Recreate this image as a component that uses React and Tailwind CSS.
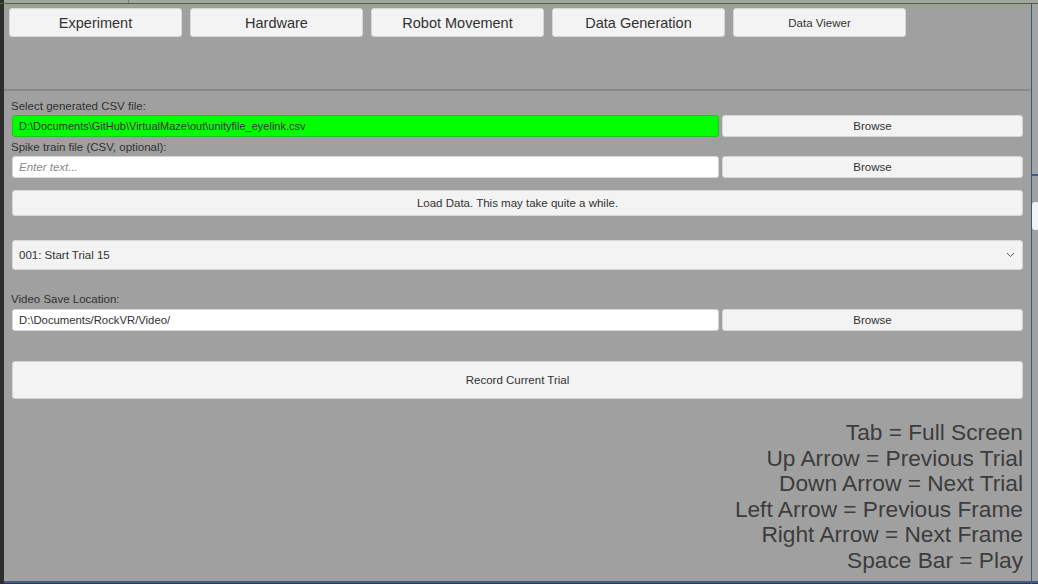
import React from "react";

const font = { fontFamily: '"Liberation Sans", Arial, sans-serif' };

function Tab({ children, small }) {
  return (
    <div
      className={`w-[173px] h-[29px] pt-[2px] rounded-[3px] bg-[#f3f3f3] border border-[#d8d8d8] flex items-center justify-center text-[#323232] ${small ? "text-[11.5px]" : "text-[14.5px]"}`}
    >
      {children}
    </div>
  );
}

function Btn({ children, className = "" }) {
  return (
    <div
      className={`rounded-[3px] bg-[#f3f3f3] border border-[#d6d6d6] flex items-center justify-center pt-[2px] text-[11.5px] text-[#323232] ${className}`}
    >
      {children}
    </div>
  );
}

export default function App() {
  return (
    <div
      className="w-[1038px] h-[584px] overflow-hidden flex flex-col bg-[#3a3a3a]"
      style={font}
    >
      {/* top strip */}
      <div className="h-[3px] flex bg-[#a5a5a5]">
        <div className="w-[4px] bg-[#2e2e2e]" />
        <div className="w-[124px]" />
        <div className="w-[1px] bg-[#7a7a7a]" />
        <div className="flex-1" />
      </div>
      <div className="h-[1px] bg-[#3d5a8a]" />
      <div className="flex flex-1 min-h-0">
        <div className="w-[4px] bg-[#2e2e2e]" />
        {/* main */}
        <div className="w-[1027px] flex flex-col bg-[#a0a0a0]">
          <div className="h-[85px] pt-[4px] pl-[5px] flex gap-[8px] items-start">
            <Tab>Experiment</Tab>
            <Tab>Hardware</Tab>
            <Tab>Robot Movement</Tab>
            <Tab>Data Generation</Tab>
            <Tab small>Data Viewer</Tab>
          </div>
          <div className="h-[2px] bg-[#898989]" />
          <div className="flex-1 flex flex-col px-[8px] pt-[7px]">
            <div className="h-[16px] pt-[1px] flex items-center text-[11.5px] text-[#323232] -ml-[1px]">
              Select generated CSV file:
            </div>
            <div className="mt-[1px] flex gap-[3px] h-[22px]">
              <div className="w-[707px] rounded-[3px] bg-[#00ff00] border border-[#22c022] flex items-center pl-[6px] pt-[1px] text-[11px] text-[#323232]">
                D:\Documents\GitHub\VirtualMaze\out\unityfile_eyelink.csv
              </div>
              <Btn className="flex-1">Browse</Btn>
            </div>
            <div className="mt-[2px] h-[16px] pt-[1px] flex items-center text-[11.5px] text-[#323232] -ml-[1px]">
              Spike train file (CSV, optional):
            </div>
            <div className="mt-[1px] flex gap-[3px] h-[22px]">
              <div className="w-[707px] rounded-[3px] bg-white border border-[#d6d6d6] flex items-center pl-[6px] pt-[1px] text-[11.5px] italic text-[#8a8a8a]">
                Enter text...
              </div>
              <Btn className="flex-1">Browse</Btn>
            </div>
            <Btn className="mt-[12px] h-[26px]">Load Data. This may take quite a while.</Btn>
            <div className="mt-[24px] h-[30px] rounded-[3px] bg-[#f3f3f3] border border-[#d6d6d6] flex items-center justify-between pl-[6px] pr-[7px] text-[11.5px] text-[#323232]">
              <span className="pt-[2px]">001: Start Trial 15</span>
              <svg width="9" height="6" viewBox="0 0 9 6" fill="none">
                <path d="M1 1l3.5 3.5L8 1" stroke="#555" strokeWidth="1" />
              </svg>
            </div>
            <div className="mt-[21px] h-[16px] pt-[1px] flex items-center text-[11.5px] text-[#323232] -ml-[1px]">
              Video Save Location:
            </div>
            <div className="mt-[2px] flex gap-[3px] h-[22px]">
              <div className="w-[707px] rounded-[3px] bg-white border border-[#d6d6d6] flex items-center pl-[6px] pt-[1px] text-[11.3px] text-[#323232]">
                D:\Documents/RockVR/Video/
              </div>
              <Btn className="flex-1">Browse</Btn>
            </div>
            <Btn className="mt-[30px] h-[38px]">Record Current Trial</Btn>
            <div className="mt-[21px] flex flex-col items-end text-[22.7px] leading-[25.6px] text-[#3c3c3c]">
              <div>Tab = Full Screen</div>
              <div>Up Arrow = Previous Trial</div>
              <div>Down Arrow = Next Trial</div>
              <div>Left Arrow = Previous Frame</div>
              <div>Right Arrow = Next Frame</div>
              <div>Space Bar = Play</div>
            </div>
          </div>
          <div className="h-[2px] bg-[#3d5a8a]" />
          <div className="h-[1px] bg-[#3a3a3a]" />
        </div>
        <div className="w-[1px] bg-[#3d5a8a]" />
        {/* right strip */}
        <div className="flex-1 flex flex-col bg-[#a0a0a0]">
          <div className="h-[170px] bg-[#a3a3a3]" />
          <div className="h-[2px] bg-[#3d5a8a]" />
          <div className="h-[26px]" />
          <div className="h-[28px] bg-[#f3f3f3] rounded-l-[3px]" />
          <div className="flex-1" />
          <div className="h-[2px] bg-[#3d5a8a]" />
          <div className="h-[1px] bg-[#3a3a3a]" />
        </div>
      </div>
    </div>
  );
}
